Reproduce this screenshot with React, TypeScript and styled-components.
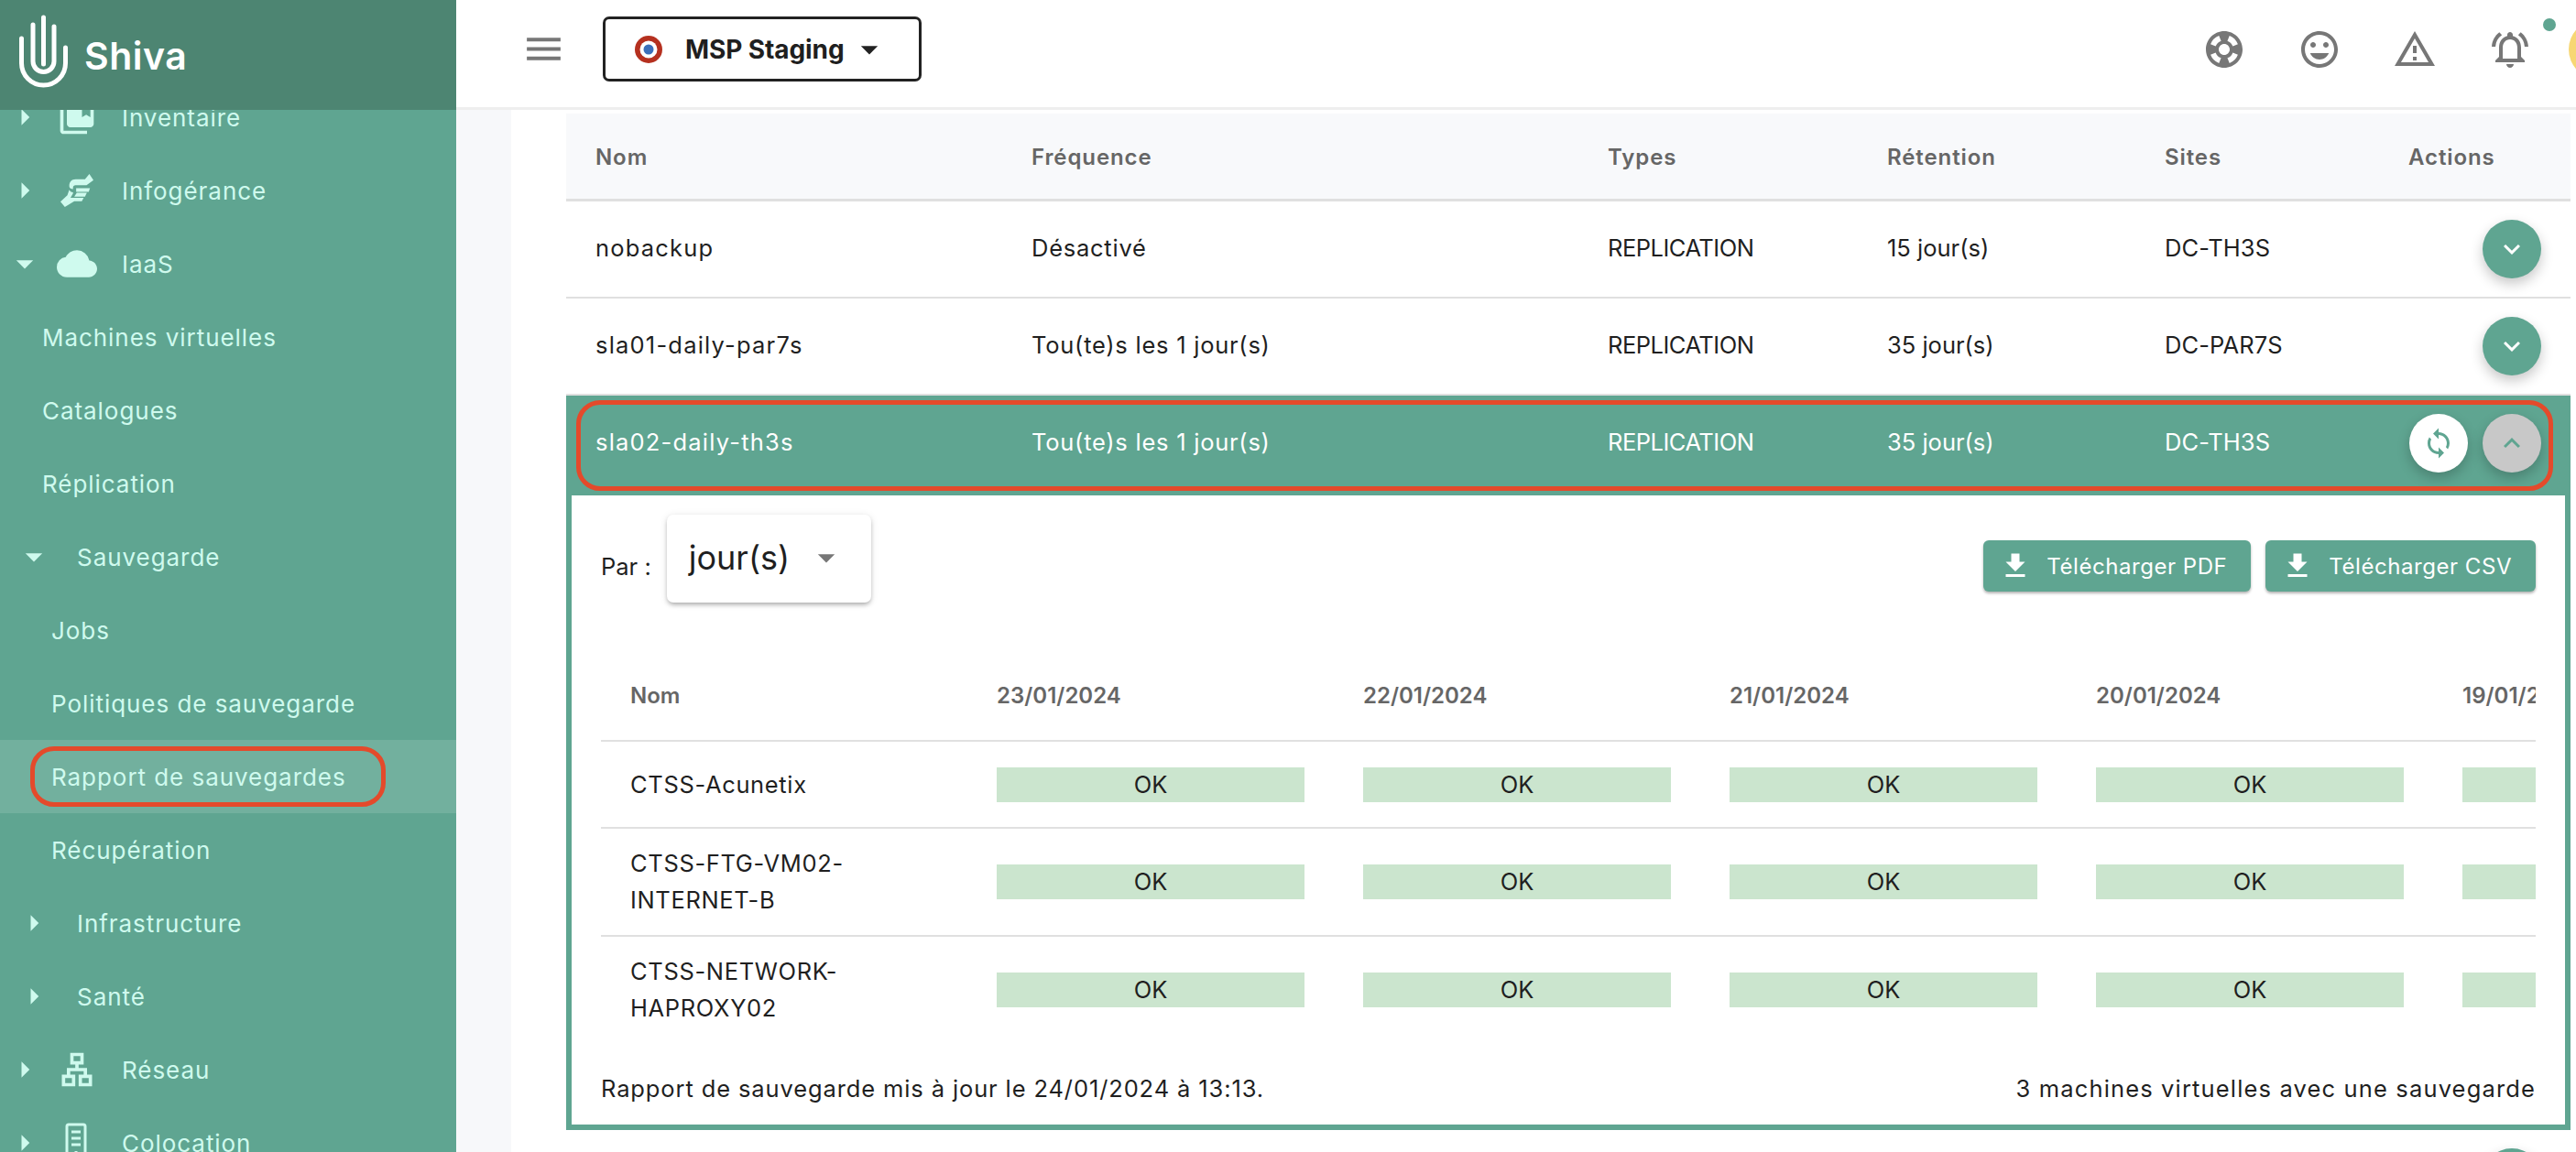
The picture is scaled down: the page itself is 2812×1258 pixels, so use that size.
import { ReactNode } from "react";
import styled, { createGlobalStyle } from "styled-components";
import {
  MdArrowDropDown,
  MdArrowRight,
  MdCloud,
  MdCollectionsBookmark,
  MdExpandLess,
  MdExpandMore,
  MdFileDownload,
  MdMenu,
  MdOutlineLan,
  MdOutlineNotificationsActive,
  MdOutlineSupport,
  MdOutlineWarningAmber,
  MdSync,
  MdTagFaces,
} from "react-icons/md";

const GREEN = "#5fa591";
const RED = "#e44a2b";
const MINT = "#cffaee";
const COLS = "476px 629px 305px 303px 266px 1fr";

// tracking per column, the system font is narrower on lowercase than the original
const TRACKS = [1.2, 0.75, -0.5, 0, 0.1];

const DATES = ["23/01/2024", "22/01/2024", "21/01/2024", "20/01/2024", "19/01/2024"];

const GlobalStyle = createGlobalStyle`
  html, body {
    margin: 0;
    height: 100%;
    overflow: hidden;
    background: #fff;
  }
  * {
    box-sizing: border-box;
  }
  body {
    font-family: Inter, "Liberation Sans", sans-serif;
    color: #1f1f1f;
  }
`;

const Page = styled.div`
  display: grid;
  grid-template-columns: 498px 1fr;
  width: 2812px;
  height: 1258px;
  overflow: hidden;
`;

const Sidebar = styled.aside`
  display: flex;
  flex-direction: column;
  background: ${GREEN};
  color: ${MINT};
  overflow: hidden;
`;

const Brand = styled.div`
  display: flex;
  align-items: center;
  flex: none;
  gap: 14px;
  height: 120px;
  padding-left: 18px;
  background: #4d8572;
  color: #fff;
  position: relative;
  z-index: 1;
`;

const BrandName = styled.span`
  font-size: 41px;
  font-weight: 600;
  letter-spacing: 0.5px;
  margin-top: 2px;
`;

const Nav = styled.nav`
  margin-top: -32px;
`;

const NavRow = styled.div<{ $pad: number; $active?: boolean }>`
  position: relative;
  display: flex;
  align-items: center;
  height: 80px;
  padding-left: ${(p) => p.$pad}px;
  font-size: 26px;
  letter-spacing: 0.95px;
  background: ${(p) => (p.$active ? "#72b09e" : "transparent")};
  ${(p) =>
    p.$active &&
    `
    &::after {
      content: "";
      position: absolute;
      left: 33px;
      right: 77px;
      top: 7px;
      bottom: 7px;
      border: 5px solid ${RED};
      border-radius: 26px;
    }
  `}
`;

const Caret = styled.span`
  display: flex;
  align-items: center;
  justify-content: center;
  flex: none;
  width: 44px;
  font-size: 42px;
`;

const OpenCaret = styled(Caret)`
  font-size: 48px;
`;

const NavIcon = styled.span`
  display: flex;
  align-items: center;
  justify-content: center;
  flex: none;
  width: 70px;
  margin-right: 14px;
  font-size: 44px;
`;

const SubLabel = styled.span`
  margin-left: 25px;
`;

const Main = styled.main`
  display: flex;
  flex-direction: column;
  min-width: 0;
  height: 1258px;
`;

const Header = styled.header`
  display: flex;
  align-items: center;
  flex: none;
  height: 120px;
  padding: 0 0 10px 71px;
  gap: 40px;
  background: #fff;
  border-bottom: 3px solid #eeeeee;
  overflow: hidden;
`;

const MenuIcon = styled.span`
  display: flex;
  color: #777;
  font-size: 49px;
`;

const TenantButton = styled.div`
  display: flex;
  align-items: center;
  width: 348px;
  height: 71px;
  padding-left: 32px;
  border: 3px solid #222;
  border-radius: 7px;
  font-size: 28px;
  font-weight: 700;
  letter-spacing: -0.1px;
`;

const TenantName = styled.span`
  margin-left: 25px;
`;

const TenantArrow = styled.span`
  display: flex;
  margin-left: 6px;
  font-size: 44px;
  color: #222;
`;

const HeaderIcons = styled.div`
  display: flex;
  align-items: center;
  gap: 56px;
  margin-left: auto;
  margin-right: -56px;
  color: #777;
  font-size: 48px;
`;

const HeaderIcon = styled.span`
  position: relative;
  display: flex;
`;

const NotifDot = styled.span`
  position: absolute;
  left: 60px;
  top: -10px;
  width: 14px;
  height: 14px;
  border-radius: 50%;
  background: ${GREEN};
`;

const Avatar = styled.span`
  width: 64px;
  height: 64px;
  margin-left: -16px;
  border-radius: 50%;
  background: #f7d774;
`;

const Content = styled.div`
  flex: 1;
  min-height: 0;
  padding-left: 60px;
  background: #f7f8fa;
  overflow: hidden;
`;

const Sheet = styled.div`
  height: 100%;
  padding: 4px 6px 0 60px;
  background: #fff;
`;

const HeadRow = styled.div`
  display: grid;
  grid-template-columns: ${COLS};
  align-items: center;
  height: 96px;
  padding: 2px 0 0 32px;
  background: #f8f9fb;
  border-bottom: 3px solid #e0e0e0;
  color: #666;
  font-size: 24px;
  font-weight: 600;
  letter-spacing: 0.9px;
`;

const Row = styled.div<{ $selected?: boolean }>`
  position: relative;
  display: grid;
  grid-template-columns: ${COLS};
  align-items: center;
  height: ${(p) => (p.$selected ? 104 : 106)}px;
  padding-left: 32px;
  font-size: 25.5px;
  background: ${(p) => (p.$selected ? GREEN : "#fff")};
  color: ${(p) => (p.$selected ? "#fff" : "#1f1f1f")};
  border-bottom: ${(p) => (p.$selected ? "none" : "2px solid #e0e0e0")};
  ${(p) =>
    p.$selected &&
    `
    &::after {
      content: "";
      position: absolute;
      left: 11px;
      right: 19px;
      top: 5px;
      bottom: 0;
      border: 5px solid ${RED};
      border-radius: 26px;
      pointer-events: none;
    }
  `}
`;

const TextCell = styled.div<{ $track: number }>`
  padding-bottom: 3px;
  letter-spacing: ${(p) => p.$track}px;
`;

const Actions = styled.div`
  display: flex;
  justify-content: flex-end;
  gap: 16px;
  padding-right: 32px;
`;

const RoundButton = styled.span<{ $bg: string; $fg: string }>`
  display: flex;
  align-items: center;
  justify-content: center;
  width: 64px;
  height: 64px;
  border-radius: 50%;
  background: ${(p) => p.$bg};
  color: ${(p) => p.$fg};
  font-size: 36px;
  box-shadow: 0 6px 14px rgba(0, 0, 0, 0.22);
`;

const Detail = styled.section`
  padding: 0 32px;
  border: 6px solid ${GREEN};
  border-top-width: 5px;
  height: 698px;
`;

const Toolbar = styled.div`
  display: flex;
  align-items: center;
  padding-top: 21px;
  margin-bottom: 40px;
`;

const ParLabel = styled.span`
  font-size: 25.5px;
  margin-right: 17px;
`;

const UnitSelect = styled.div`
  display: flex;
  align-items: center;
  justify-content: space-between;
  width: 223px;
  height: 96px;
  margin-bottom: 16px;
  padding: 0 27px 2px 24px;
  border-radius: 7px;
  background: #fff;
  font-size: 36px;
  box-shadow: 0 3px 5px -1px rgba(0, 0, 0, 0.3), 0 1px 8px rgba(0, 0, 0, 0.1);
`;

const UnitArrow = styled.span`
  display: flex;
  color: #777;
  font-size: 44px;
`;

const DownloadGroup = styled.div`
  display: flex;
  gap: 16px;
  margin-left: auto;
`;

const DownloadButton = styled.span`
  display: flex;
  align-items: center;
  gap: 16px;
  height: 56px;
  padding: 0 26px 0 17px;
  border-radius: 6px;
  background: ${GREEN};
  color: #fff;
  font-size: 24px;
  letter-spacing: 0.55px;
  box-shadow: 0 2px 3px rgba(0, 0, 0, 0.3);

  svg {
    font-size: 36px;
  }
`;

const Report = styled.div`
  overflow: hidden;
`;

const ReportHead = styled.div`
  display: grid;
  grid-template-columns: repeat(6, 400px);
  align-items: center;
  height: 96px;
  padding-bottom: 2px;
  border-bottom: 2px solid #e0e0e0;
  color: #666;
  font-size: 24px;
  font-weight: 600;
`;

const ReportRow = styled.div<{ $last?: boolean }>`
  display: grid;
  grid-template-columns: repeat(6, 400px);
  align-items: center;
  min-height: 95px;
  padding: 18px 0;
  border-bottom: ${(p) => (p.$last ? "none" : "2px solid #e0e0e0")};
  font-size: 25.5px;
  letter-spacing: 0.65px;
`;

const ReportCell = styled.div`
  padding: 0 32px;
  line-height: 40px;
`;

const OkBadge = styled.div`
  height: 38px;
  background: #cbe5ce;
  text-align: center;
  line-height: 38px;
  letter-spacing: 0;
`;

const ReportFooter = styled.div`
  display: flex;
  align-items: center;
  justify-content: space-between;
  height: 89px;
  padding-top: 9px;
  font-size: 25.5px;
  letter-spacing: 0.88px;

  span:last-child {
    letter-spacing: 1.15px;
  }
`;

const ShivaLogo = () => (
  <svg width="60" height="100" viewBox="20 10 60 100" fill="none" stroke="#fff" strokeWidth="5" strokeLinecap="round">
    <path d="M25.5 42V69a24 24 0 0 0 48 0V52" />
    <path d="M38 27V67a11.5 11.5 0 0 0 23 0V29" />
    <path d="M49.5 19V70" />
  </svg>
);

const Roundel = () => (
  <svg width="30" height="30" viewBox="0 0 30 30">
    <circle cx="15" cy="15" r="15" fill="#b5301f" />
    <circle cx="15" cy="15" r="9.5" fill="#fff" />
    <circle cx="15" cy="15" r="5.5" fill="#3b6fba" />
  </svg>
);

const HandsIcon = () => (
  <svg width="36" height="36" viewBox="0 0 105 105" fill={MINT}>
    <path d="M92 0l13 20-22 16H48c-5 0-8 3-8 8v4c-6 0-12-2-12-9 0-14 8-22 20-22h30z" />
    <path d="M50 45h44l-4 12H50z" />
    <path d="M14 105 0 88l22-20 6-18c2 4 6 8 12 8v4l-8 14h42l-6 11H44z" />
    <path d="M52 60h32l-6 12H44z" />
  </svg>
);

const ColocationIcon = () => (
  <svg width="26" height="44" viewBox="0 0 26 44" fill="none" stroke={MINT} strokeWidth="3">
    <rect x="2" y="2" width="20" height="40" rx="2" />
    <path d="M7 10h10M7 17h10M7 24h10M12 31v9" />
  </svg>
);

const Right = () => (
  <Caret>
    <MdArrowRight />
  </Caret>
);

const Down = () => (
  <OpenCaret>
    <MdArrowDropDown />
  </OpenCaret>
);

type TopItemProps = { icon: ReactNode; label: string; open?: boolean };

const TopItem = ({ icon, label, open }: TopItemProps) => (
  <NavRow $pad={5}>
    {open ? <Down /> : <Right />}
    <NavIcon>{icon}</NavIcon>
    {label}
  </NavRow>
);

const Group = ({ label, open }: { label: string; open?: boolean }) => (
  <NavRow $pad={15}>
    {open ? <Down /> : <Right />}
    <SubLabel>{label}</SubLabel>
  </NavRow>
);

const SideNav = () => (
  <Sidebar>
    <Brand>
      <ShivaLogo />
      <BrandName>Shiva</BrandName>
    </Brand>
    <Nav>
      <TopItem icon={<MdCollectionsBookmark />} label="Inventaire" />
      <TopItem icon={<HandsIcon />} label="Infogérance" />
      <TopItem icon={<MdCloud />} label="IaaS" open />
      <NavRow $pad={46}>Machines virtuelles</NavRow>
      <NavRow $pad={46}>Catalogues</NavRow>
      <NavRow $pad={46}>Réplication</NavRow>
      <Group label="Sauvegarde" open />
      <NavRow $pad={56}>Jobs</NavRow>
      <NavRow $pad={56}>Politiques de sauvegarde</NavRow>
      <NavRow $pad={56} $active>
        Rapport de sauvegardes
      </NavRow>
      <NavRow $pad={56}>Récupération</NavRow>
      <Group label="Infrastructure" />
      <Group label="Santé" />
      <TopItem icon={<MdOutlineLan />} label="Réseau" />
      <TopItem icon={<ColocationIcon />} label="Colocation" />
    </Nav>
  </Sidebar>
);

const TopBar = () => (
  <Header>
    <MenuIcon>
      <MdMenu />
    </MenuIcon>
    <TenantButton>
      <Roundel />
      <TenantName>MSP Staging</TenantName>
      <TenantArrow>
        <MdArrowDropDown />
      </TenantArrow>
    </TenantButton>
    <HeaderIcons>
      <HeaderIcon>
        <MdOutlineSupport />
      </HeaderIcon>
      <HeaderIcon>
        <MdTagFaces />
      </HeaderIcon>
      <HeaderIcon>
        <MdOutlineWarningAmber />
      </HeaderIcon>
      <HeaderIcon>
        <MdOutlineNotificationsActive />
        <NotifDot />
      </HeaderIcon>
      <Avatar />
    </HeaderIcons>
  </Header>
);

const ExpandButton = () => (
  <Actions>
    <RoundButton $bg={GREEN} $fg="#fff">
      <MdExpandMore />
    </RoundButton>
  </Actions>
);

const RowCells = ({ cells }: { cells: string[] }) => (
  <>
    {cells.map((cell, index) => (
      <TextCell key={index} $track={TRACKS[index]}>
        {cell}
      </TextCell>
    ))}
  </>
);

const PolicyRow = ({ cells }: { cells: string[] }) => (
  <Row>
    <RowCells cells={cells} />
    <ExpandButton />
  </Row>
);

const ReportLine = ({ name, last }: { name: ReactNode; last?: boolean }) => (
  <ReportRow $last={last}>
    <ReportCell>{name}</ReportCell>
    {DATES.map((date) => (
      <ReportCell key={date}>
        <OkBadge>OK</OkBadge>
      </ReportCell>
    ))}
  </ReportRow>
);

const App = () => (
  <>
    <GlobalStyle />
    <Page>
      <SideNav />
      <Main>
        <TopBar />
        <Content>
          <Sheet>
            <HeadRow>
              <div>Nom</div>
              <div>Fréquence</div>
              <div>Types</div>
              <div>Rétention</div>
              <div>Sites</div>
              <div>Actions</div>
            </HeadRow>
            <PolicyRow cells={["nobackup", "Désactivé", "REPLICATION", "15 jour(s)", "DC-TH3S"]} />
            <PolicyRow cells={["sla01-daily-par7s", "Tou(te)s les 1 jour(s)", "REPLICATION", "35 jour(s)", "DC-PAR7S"]} />
            <Row $selected>
              <RowCells cells={["sla02-daily-th3s", "Tou(te)s les 1 jour(s)", "REPLICATION", "35 jour(s)", "DC-TH3S"]} />
              <Actions>
                <RoundButton $bg="#fff" $fg={GREEN}>
                  <MdSync />
                </RoundButton>
                <RoundButton $bg="#c8c8c8" $fg={GREEN}>
                  <MdExpandLess />
                </RoundButton>
              </Actions>
            </Row>
            <Detail>
              <Toolbar>
                <ParLabel>Par :</ParLabel>
                <UnitSelect>
                  jour(s)
                  <UnitArrow>
                    <MdArrowDropDown />
                  </UnitArrow>
                </UnitSelect>
                <DownloadGroup>
                  <DownloadButton>
                    <MdFileDownload />
                    Télécharger PDF
                  </DownloadButton>
                  <DownloadButton>
                    <MdFileDownload />
                    Télécharger CSV
                  </DownloadButton>
                </DownloadGroup>
              </Toolbar>
              <Report>
                <ReportHead>
                  <ReportCell>Nom</ReportCell>
                  {DATES.map((date) => (
                    <ReportCell key={date}>{date}</ReportCell>
                  ))}
                </ReportHead>
                <ReportLine name="CTSS-Acunetix" />
                <ReportLine name={<>CTSS-FTG-VM02-<br />INTERNET-B</>} />
                <ReportLine name={<>CTSS-NETWORK-<br />HAPROXY02</>} last />
              </Report>
              <ReportFooter>
                <span>Rapport de sauvegarde mis à jour le 24/01/2024 à 13:13.</span>
                <span>3 machines virtuelles avec une sauvegarde</span>
              </ReportFooter>
            </Detail>
            <Row>
              <div />
              <div />
              <div />
              <div />
              <div />
              <ExpandButton />
            </Row>
          </Sheet>
        </Content>
      </Main>
    </Page>
  </>
);

export default App;
